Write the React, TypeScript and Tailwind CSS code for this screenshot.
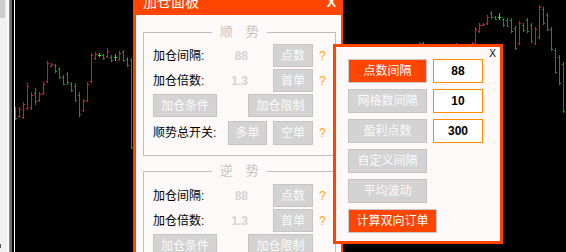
import type { ReactNode } from "react";

type Bar = [number, number, number, number, number, "r" | "g" | "l"];

// x, high, low, open, close, colour
const BARS: Bar[] = [
  [15, 107, 120, 108, 118, "g"],
  [19, 107, 118, 116, 109, "r"],
  [23, 102, 119, 117, 104, "r"],
  [27, 83, 110, 108, 86, "r"],
  [31, 92, 110, 107, 95, "r"],
  [35, 88, 105, 93, 101, "g"],
  [39, 92, 102, 100, 94, "r"],
  [43, 82, 95, 93, 84, "r"],
  [47, 61, 83, 81, 63, "r"],
  [51, 63, 67, 66, 64, "r"],
  [55, 64, 73, 65, 71, "g"],
  [59, 67, 79, 69, 77, "g"],
  [63, 75, 85, 77, 84, "g"],
  [67, 72, 85, 74, 82, "g"],
  [71, 82, 92, 84, 90, "g"],
  [75, 83, 102, 86, 100, "g"],
  [79, 92, 117, 95, 114, "g"],
  [83, 99, 112, 110, 101, "r"],
  [87, 82, 102, 100, 84, "r"],
  [91, 53, 83, 81, 55, "r"],
  [95, 52, 60, 58, 54, "r"],
  [99, 53, 57, 55, 55, "l"],
  [103, 54, 60, 55, 58, "g"],
  [107, 48, 58, 56, 51, "r"],
  [111, 55, 62, 57, 60, "g"],
  [115, 54, 61, 57, 57, "l"],
  [119, 51, 61, 59, 53, "r"],
  [123, 50, 62, 52, 60, "g"],
  [127, 57, 67, 59, 65, "g"],
  [131, 58, 149, 60, 147, "g"],
  [419, 42, 50, 48, 43, "r"],
  [423, 42, 50, 43, 48, "g"],
  [456, 43, 50, 48, 44, "r"],
  [472, 42, 50, 48, 43, "r"],
  [475, 27, 50, 45, 29, "r"],
  [479, 23, 33, 31, 25, "r"],
  [483, 23, 26, 25, 24, "r"],
  [487, 15, 25, 23, 17, "r"],
  [491, 11, 19, 13, 17, "g"],
  [495, 16, 20, 17, 19, "g"],
  [499, 13, 20, 17, 17, "l"],
  [503, 18, 27, 19, 25, "g"],
  [507, 18, 27, 20, 26, "g"],
  [511, 18, 33, 20, 31, "g"],
  [515, 26, 50, 28, 48, "g"],
  [519, 21, 45, 43, 23, "r"],
  [523, 23, 32, 25, 30, "g"],
  [527, 18, 33, 20, 31, "g"],
  [531, 23, 43, 25, 41, "g"],
  [535, 27, 45, 43, 29, "r"],
  [539, 5, 39, 37, 7, "r"],
  [543, 7, 25, 9, 23, "g"],
  [547, 13, 31, 15, 29, "g"],
  [551, 27, 51, 29, 49, "g"],
  [555, 48, 74, 50, 72, "g"],
  [559, 55, 85, 57, 83, "g"],
  [563, 62, 113, 64, 111, "g"],
];

const COLORS = { r: "#dc143c", g: "#228b22", l: "#00ff00" };

function Chart() {
  return (
    <svg width={551} height={252} viewBox="15 0 551 252" shapeRendering="crispEdges">
      {BARS.map(([x, hi, lo, o, c, col], i) => (
        <g key={i} fill={COLORS[col]}>
          <rect x={x} y={hi} width={1} height={lo - hi} />
          <rect x={x - 1} y={o} width={1} height={1} />
          <rect x={x + 1} y={c} width={1} height={1} />
        </g>
      ))}
    </svg>
  );
}

function GrayBtn({ children, className }: { children: ReactNode; className: string }) {
  return (
    <div
      className={`flex items-center justify-center border border-[#c4c4c4] bg-[#d3d3d3] text-[12px] leading-none text-[#fafafa] ${className}`}
    >
      {children}
    </div>
  );
}

function Help() {
  return <span className="ml-[6px] text-[12px] leading-none text-[#ffa500]">?</span>;
}

function ParamRow({ label, value, unit }: { label: string; value: string; unit: string }) {
  return (
    <div className="flex h-[23px] items-center">
      <span className="w-[75px] text-[12px] leading-none text-black">{label}</span>
      <span className="w-[20px] text-right text-[12px] font-bold leading-none text-[#d3d3d3]">{value}</span>
      <GrayBtn className="ml-[25px] h-[23px] w-[40px]">{unit}</GrayBtn>
      <Help />
    </div>
  );
}

function Group({ title, children, className }: { title: string; children: ReactNode; className: string }) {
  return (
    <fieldset className={`ml-[7px] w-[189px] border border-[#bdbdbd] px-[9px] pb-[10px] ${className}`}>
      <legend className="mx-auto px-2 text-[13px] leading-[16px] text-[#c4c4c4]">{title}</legend>
      <div className="flex flex-col gap-[2px]">{children}</div>
    </fieldset>
  );
}

function AddPanel() {
  return (
    <div className="absolute left-[133px] top-[-11px] w-[210px] bg-[#ff4500] pl-[3px] pr-[2px]">
      <div className="flex h-[26px] items-center justify-between pl-[7px] pr-[5px] text-white">
        <span className="text-[14px] leading-none">加仓面板</span>
        <span className="text-[14px] font-bold leading-none">X</span>
      </div>
      <div className="h-[260px] bg-[#fdf9f8] pt-[9px]">
        <Group title="顺　势" className="pt-[4px]">
          <ParamRow label="加仓间隔:" value="88" unit="点数" />
          <ParamRow label="加仓倍数:" value="1.3" unit="首单" />
          <div className="flex h-[23px] items-center">
            <GrayBtn className="h-[23px] w-[64px]">加仓条件</GrayBtn>
            <GrayBtn className="ml-[31px] h-[23px] w-[65px]">加仓限制</GrayBtn>
          </div>
          <div className="mt-[2px] flex h-[24px] items-center">
            <span className="w-[75px] text-[12px] leading-none text-black">顺势总开关:</span>
            <GrayBtn className="h-[24px] w-[39px]">多单</GrayBtn>
            <GrayBtn className="ml-[6px] h-[24px] w-[40px]">空单</GrayBtn>
            <Help />
          </div>
        </Group>
        <Group title="逆　势" className="mt-[7px] pt-[5px]">
          <ParamRow label="加仓间隔:" value="88" unit="点数" />
          <ParamRow label="加仓倍数:" value="1.3" unit="首单" />
          <div className="flex h-[23px] items-center">
            <GrayBtn className="h-[23px] w-[64px]">加仓条件</GrayBtn>
            <GrayBtn className="ml-[31px] h-[23px] w-[65px]">加仓限制</GrayBtn>
          </div>
        </Group>
      </div>
    </div>
  );
}

function GridRow({ label, value, active }: { label: string; value?: string; active?: boolean }) {
  return (
    <div className="flex h-[24px] items-center">
      {active ? (
        <div className="flex h-[24px] w-[79px] items-center justify-center border border-[#c8c8c8] bg-[#ff4500] text-[12px] leading-none text-white">
          {label}
        </div>
      ) : (
        <GrayBtn className="h-[24px] w-[79px]">{label}</GrayBtn>
      )}
      {value && (
        <div className="ml-[6px] flex h-[24px] w-[50px] items-center justify-center border border-[#ff8c00] bg-white text-[12px] font-bold leading-none text-black">
          {value}
        </div>
      )}
    </div>
  );
}

function GridPanel() {
  return (
    <div className="absolute left-[333px] top-[44px] h-[200px] w-[170px] border-[3px] border-[#ff4500] bg-[#fdf9f8] px-[12px]">
      <div className="-mr-[8px] flex h-[12px] justify-end">
        <span className="mt-[2px] text-[10px] leading-[10px] text-black">X</span>
      </div>
      <div className="flex flex-col gap-[6px]">
        <GridRow label="点数间隔" value="88" active />
        <GridRow label="网格数间隔" value="10" />
        <GridRow label="盈利点数" value="300" />
        <GridRow label="自定义间隔" />
        <GridRow label="平均波动" />
        <div className="flex h-[24px] w-[89px] items-center justify-center border border-[#c8c8c8] bg-[#ff4500] text-[12px] leading-none text-white">
          计算双向订单
        </div>
      </div>
    </div>
  );
}

export default function App() {
  return (
    <div className="relative flex h-[252px] w-[566px] overflow-hidden bg-black font-['Liberation_Sans','Noto_Sans_CJK_SC',sans-serif]">
      {/* scroll strip and frame at the left */}
      <div className="flex w-[7px] flex-col justify-between bg-[#f0f0f0]">
        <div className="h-[18px] w-[5px] bg-[#cdcdcd]" />
        <div className="mb-[4px] h-[4px] w-[1px] bg-[#555]" />
      </div>
      <div className="w-[2px] bg-[#fafafa]" />
      <div className="w-[1px] bg-[#8c8c8c]" />
      <div className="w-[2px] bg-[#6a6a6a]" />
      <div className="w-[2px] bg-black" />
      <div className="w-[1px] bg-white" />
      <div className="flex-1">
        <Chart />
      </div>

      <AddPanel />
      <GridPanel />
    </div>
  );
}
